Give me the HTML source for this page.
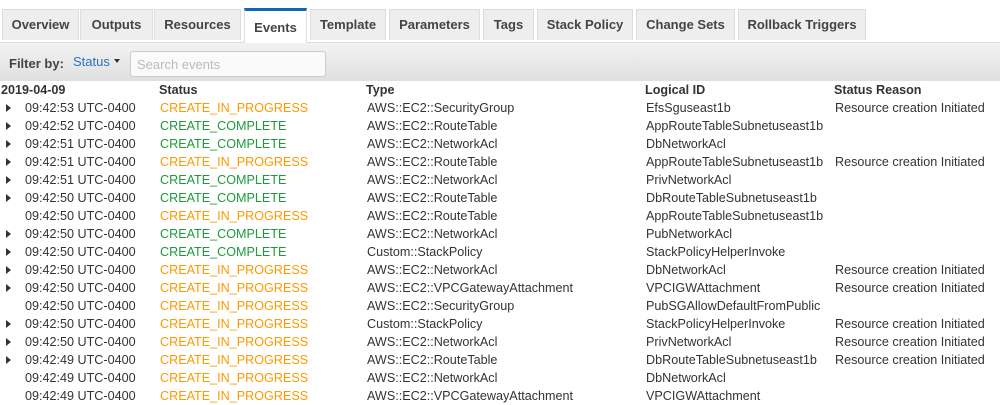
<!DOCTYPE html>
<html><head><meta charset="utf-8"><style>
body{margin:0;width:1000px;height:404px;overflow:hidden;background:#fff;font-family:"Liberation Sans",sans-serif;color:#333;font-size:12.6px}
.tabs{position:absolute;top:0;left:0;width:1000px;height:42px;border-bottom:1px solid #ddd}
.tab{position:absolute;top:9px;height:31px;background:#eee;border:1px solid #ddd;border-bottom:none;font-weight:bold;font-size:13px;line-height:30px;text-align:center;color:#444;box-sizing:border-box}
.tab.act{background:#fff;border-top:3px solid #1166bb;top:8px;height:35px;line-height:34px}
.bar{position:absolute;top:43px;left:0;width:1000px;height:38px;background:linear-gradient(#f2f2f2,#e0e0e0)}
.fb{position:absolute;left:9px;top:13px;font-weight:bold;color:#444;font-size:13px}
.st{position:absolute;left:73px;top:11px;color:#2d6fc0;font-size:13px}
.st:after{content:"";display:inline-block;margin-left:4px;vertical-align:3px;border:3.5px solid transparent;border-top:4px solid #333;border-bottom:0}
.search{position:absolute;left:130px;top:8px;width:196px;height:26px;background:#fafafa;border:1px solid #ccc;border-radius:3px;box-sizing:border-box;color:#bbb;padding:5px 6px;font-size:13px}
.row{position:absolute;left:0;width:1000px;height:18px;line-height:18px;white-space:nowrap}
.row span{position:absolute}
.h{font-weight:bold;color:#333}
.o{color:#ff9900}.g{color:#1d9a3a}
.ar{left:6px;top:5px;width:0;height:0;border-left:5px solid #333;border-top:4px solid transparent;border-bottom:4px solid transparent}
</style></head><body>
<div class="tabs">
<div class="tab" style="left:2px;width:77px">Overview</div>
<div class="tab" style="left:80px;width:73px">Outputs</div>
<div class="tab" style="left:154px;width:87px">Resources</div>
<div class="tab act" style="left:244px;width:63px">Events</div>
<div class="tab" style="left:310px;width:76px">Template</div>
<div class="tab" style="left:389px;width:91px">Parameters</div>
<div class="tab" style="left:483px;width:51px">Tags</div>
<div class="tab" style="left:537px;width:96px">Stack Policy</div>
<div class="tab" style="left:636px;width:99px">Change Sets</div>
<div class="tab" style="left:738px;width:128px">Rollback Triggers</div>
</div>
<div class="bar"><span class="fb">Filter by:</span><span class="st">Status</span><div class="search">Search events</div></div>
<div class="row h" style="top:81px"><span style="left:1px">2019-04-09</span><span style="left:159px">Status</span><span style="left:366px">Type</span><span style="left:645px">Logical ID</span><span style="left:834px">Status Reason</span></div>
<div id="rows"></div>
<script>
var d=[
[1,"09:42:53","o","CREATE_IN_PROGRESS","AWS::EC2::SecurityGroup","EfsSguseast1b","Resource creation Initiated"],
[1,"09:42:52","g","CREATE_COMPLETE","AWS::EC2::RouteTable","AppRouteTableSubnetuseast1b",""],
[1,"09:42:51","g","CREATE_COMPLETE","AWS::EC2::NetworkAcl","DbNetworkAcl",""],
[1,"09:42:51","o","CREATE_IN_PROGRESS","AWS::EC2::RouteTable","AppRouteTableSubnetuseast1b","Resource creation Initiated"],
[1,"09:42:51","g","CREATE_COMPLETE","AWS::EC2::NetworkAcl","PrivNetworkAcl",""],
[1,"09:42:50","g","CREATE_COMPLETE","AWS::EC2::RouteTable","DbRouteTableSubnetuseast1b",""],
[0,"09:42:50","o","CREATE_IN_PROGRESS","AWS::EC2::RouteTable","AppRouteTableSubnetuseast1b",""],
[1,"09:42:50","g","CREATE_COMPLETE","AWS::EC2::NetworkAcl","PubNetworkAcl",""],
[1,"09:42:50","g","CREATE_COMPLETE","Custom::StackPolicy","StackPolicyHelperInvoke",""],
[1,"09:42:50","o","CREATE_IN_PROGRESS","AWS::EC2::NetworkAcl","DbNetworkAcl","Resource creation Initiated"],
[1,"09:42:50","o","CREATE_IN_PROGRESS","AWS::EC2::VPCGatewayAttachment","VPCIGWAttachment","Resource creation Initiated"],
[0,"09:42:50","o","CREATE_IN_PROGRESS","AWS::EC2::SecurityGroup","PubSGAllowDefaultFromPublic",""],
[1,"09:42:50","o","CREATE_IN_PROGRESS","Custom::StackPolicy","StackPolicyHelperInvoke","Resource creation Initiated"],
[1,"09:42:50","o","CREATE_IN_PROGRESS","AWS::EC2::NetworkAcl","PrivNetworkAcl","Resource creation Initiated"],
[1,"09:42:49","o","CREATE_IN_PROGRESS","AWS::EC2::RouteTable","DbRouteTableSubnetuseast1b","Resource creation Initiated"],
[0,"09:42:49","o","CREATE_IN_PROGRESS","AWS::EC2::NetworkAcl","DbNetworkAcl",""],
[0,"09:42:49","o","CREATE_IN_PROGRESS","AWS::EC2::VPCGatewayAttachment","VPCIGWAttachment",""]];
var h="";d.forEach(function(r,i){h+='<div class="row" style="top:'+(99+i*18)+'px">'+(r[0]?'<span class="ar"></span>':'')+'<span style="left:25px">'+r[1]+' UTC-0400</span><span class="'+r[2]+'" style="left:160px">'+r[3]+'</span><span style="left:367px">'+r[4]+'</span><span style="left:646px">'+r[5]+'</span><span style="left:835px">'+r[6]+'</span></div>';});
document.getElementById("rows").innerHTML=h;
</script>
</body></html>
